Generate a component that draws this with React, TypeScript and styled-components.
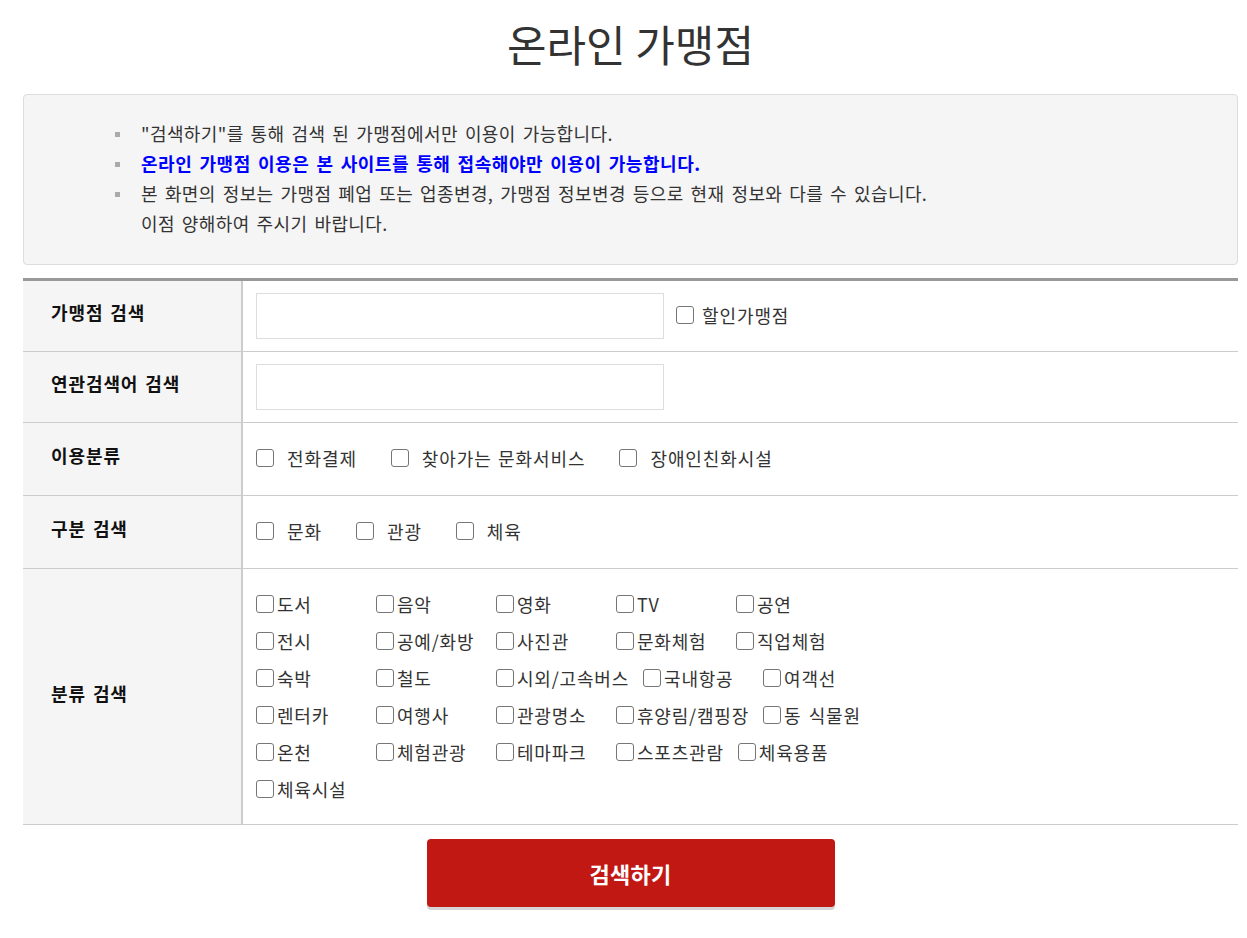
import React from "react";
import styled, { createGlobalStyle } from "styled-components";

const Global = createGlobalStyle`
  html, body { margin: 0; padding: 0; background: #fff; }
  body { font-family: "Noto Sans CJK KR", "Noto Sans", sans-serif; color: #333; }
  * { box-sizing: border-box; }
`;

const Page = styled.div`
  margin: 0 9px 0 23px;
  padding-bottom: 30px;
`;

const Title = styled.h1`
  margin: 0;
  padding-top: 12px;
  height: 94px;
  text-align: center;
  font-size: 43px;
  font-weight: 400;
  line-height: 62px;
  color: #333;
`;

const InfoBox = styled.div`
  background: #f5f5f5;
  border: 1px solid #ddd;
  border-radius: 4px;
  padding: 23px 0 26px;
`;

const InfoList = styled.ul`
  list-style: none;
  margin: 0;
  padding: 0 0 0 117px;
`;

const InfoItem = styled.li<{ $strong?: boolean; $noBullet?: boolean }>`
  position: relative;
  font-size: 18px;
  line-height: 30px;
  letter-spacing: ${(p) => (p.$strong ? "0.55px" : "0.4px")};
  word-spacing: 2.5px;
  color: ${(p) => (p.$strong ? "#0000ff" : "#333")};
  font-weight: ${(p) => (p.$strong ? 700 : 400)};
  &::before {
    content: "";
    display: ${(p) => (p.$noBullet ? "none" : "block")};
    position: absolute;
    left: -26px;
    top: 14px;
    width: 5px;
    height: 5px;
    background: #aaa;
  }
`;

const Table = styled.div`
  margin-top: 13px;
  border-top: 3px solid #999;
  border-bottom: 1px solid #ccc;
`;

const Row = styled.div<{ $h: number }>`
  box-sizing: content-box;
  display: grid;
  grid-template-columns: 220px 1fr;
  min-height: ${(p) => p.$h}px;
  & + & { border-top: 1px solid #ccc; }
`;

const Label = styled.div`
  background: #f5f5f5;
  border-right: 2px solid #ccc;
  display: flex;
  align-items: center;
  padding: 0 0 8px 28px;
  font-size: 18px;
  font-weight: 700;
  color: #111;
  letter-spacing: 0.9px;
  word-spacing: 2px;
`;

const Cell = styled.div<{ $pad?: string }>`
  display: flex;
  align-items: center;
  flex-wrap: wrap;
  padding: ${(p) => p.$pad || "0 13px 3px"};
`;

const TextInput = styled.input`
  width: 408px;
  height: 46px;
  margin-top: 2px;
  border: 1px solid #ddd;
  background: #fff;
  outline: none;
  font-size: 16px;
  padding: 0 10px;
`;

const Box = styled.input.attrs({ type: "checkbox" })`
  appearance: none;
  -webkit-appearance: none;
  width: 18px;
  height: 18px;
  margin: 0;
  flex: none;
  border: 1px solid #767676;
  border-radius: 3px;
  background: #fff;
`;

const Check = styled.label<{ $gap: number; $after: number; $lead?: number }>`
  display: inline-flex;
  align-items: center;
  gap: ${(p) => p.$gap}px;
  margin-left: ${(p) => p.$lead || 0}px;
  margin-right: ${(p) => p.$after}px;
  font-size: 18px;
  color: #333;
  letter-spacing: 0.9px;
  word-spacing: 1.5px;
  white-space: nowrap;
`;

const Grid = styled.div`
  display: flex;
  flex-direction: column;
  width: 720px;
`;

const GridLine = styled.div`
  display: flex;
`;

const GridItem = styled.label`
  display: inline-flex;
  align-items: center;
  gap: 3px;
  min-width: 106px;
  margin-right: 14px;
  height: 37px;
  font-size: 18px;
  color: #333;
  letter-spacing: 0.8px;
  word-spacing: 2.5px;
  white-space: nowrap;
`;

const ButtonWrap = styled.div`
  display: flex;
  justify-content: center;
  padding-top: 14px;
`;

const SearchButton = styled.button`
  width: 408px;
  height: 68px;
  border: none;
  border-radius: 4px;
  background: #c21813;
  color: #fff;
  font-family: inherit;
  font-size: 22px;
  font-weight: 700;
  letter-spacing: 0.3px;
  box-shadow: 0 3px 0 #d5d5d5;
  cursor: pointer;
`;

const categories: string[][] = [
  ["도서", "음악", "영화", "TV", "공연"],
  ["전시", "공예/화방", "사진관", "문화체험", "직업체험"],
  ["숙박", "철도", "시외/고속버스", "국내항공", "여객선"],
  ["렌터카", "여행사", "관광명소", "휴양림/캠핑장", "동 식물원"],
  ["온천", "체험관광", "테마파크", "스포츠관람", "체육용품"],
  ["체육시설"],
];

export default function App() {
  return (
    <Page>
      <Global />
      <Title>온라인 가맹점</Title>
      <InfoBox>
        <InfoList>
          <InfoItem>"검색하기"를 통해 검색 된 가맹점에서만 이용이 가능합니다.</InfoItem>
          <InfoItem $strong>온라인 가맹점 이용은 본 사이트를 통해 접속해야만 이용이 가능합니다.</InfoItem>
          <InfoItem>본 화면의 정보는 가맹점 폐업 또는 업종변경, 가맹점 정보변경 등으로 현재 정보와 다를 수 있습니다.</InfoItem>
          <InfoItem $noBullet>이점 양해하여 주시기 바랍니다.</InfoItem>
        </InfoList>
      </InfoBox>
      <Table>
        <Row $h={70}>
          <Label>가맹점 검색</Label>
          <Cell>
            <TextInput />
            <Check $gap={8} $after={0} $lead={12}>
              <Box />
              할인가맹점
            </Check>
          </Cell>
        </Row>
        <Row $h={70}>
          <Label>연관검색어 검색</Label>
          <Cell>
            <TextInput />
          </Cell>
        </Row>
        <Row $h={72}>
          <Label>이용분류</Label>
          <Cell>
            {["전화결제", "찾아가는 문화서비스", "장애인친화시설"].map((t) => (
              <Check key={t} $gap={13} $after={34}>
                <Box />
                {t}
              </Check>
            ))}
          </Cell>
        </Row>
        <Row $h={72}>
          <Label>구분 검색</Label>
          <Cell>
            {["문화", "관광", "체육"].map((t) => (
              <Check key={t} $gap={13} $after={34}>
                <Box />
                {t}
              </Check>
            ))}
          </Cell>
        </Row>
        <Row $h={255}>
          <Label>분류 검색</Label>
          <Cell $pad="16px 13px">
            <Grid>
              {categories.map((line, i) => (
                <GridLine key={i}>
                  {line.map((t) => (
                    <GridItem key={t}>
                      <Box />
                      {t}
                    </GridItem>
                  ))}
                </GridLine>
              ))}
            </Grid>
          </Cell>
        </Row>
      </Table>
      <ButtonWrap>
        <SearchButton>검색하기</SearchButton>
      </ButtonWrap>
    </Page>
  );
}
